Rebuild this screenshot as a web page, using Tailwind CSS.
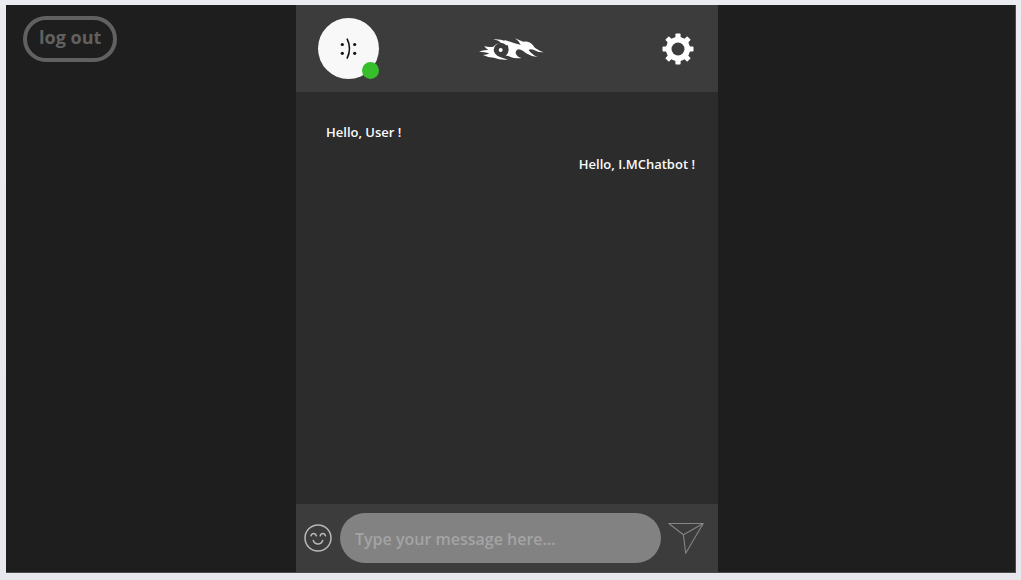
<!DOCTYPE html>
<html lang="en">
<head>
<meta charset="utf-8">
<title>I.MChatbot</title>
<script src="https://cdn.jsdelivr.net/npm/@tailwindcss/browser@4"></script>
</head>
<body class="h-screen bg-linear-to-b from-[#ebecf1] to-[#e6e8ee] pt-[5px] pr-[5px] pb-[7px] pl-[6px] font-['Open_Sans',sans-serif]">
<div class="grid h-full grid-cols-[290fr_422fr_297fr] border-r border-b border-[#4a4a4a] bg-[#1e1e1e]">
  <nav class="pt-[11px] pl-[17px]">
    <button type="button" class="h-[46px] rounded-full border-4 border-[#616161] px-3 pb-1 text-lg leading-none font-bold text-[#616161]">log out</button>
  </nav>
  <main class="flex min-h-0 flex-col bg-[#2c2c2c]">
    <header class="grid h-[87px] shrink-0 grid-cols-[1fr_auto_1fr] items-center bg-[#3c3c3c] pr-6 pl-[22px]">
      <div class="relative size-[61px] rounded-full bg-[#f8f8f8]">
        <svg class="size-full" viewBox="0 0 61 61" role="img" aria-label="Bot avatar">
          <g fill="#111"><circle cx="24.3" cy="26.5" r="1.6"/><circle cx="24.3" cy="35.3" r="1.6"/><circle cx="36.7" cy="26.5" r="1.6"/><circle cx="36.7" cy="35.3" r="1.6"/></g>
          <path d="M29 20.7Q34 30.5 29 40.6" fill="none" stroke="#111" stroke-width="1.6"/>
        </svg>
        <span class="absolute right-0 bottom-0 size-[17px] rounded-full bg-[#36bf2b]"></span>
      </div>
      <svg class="ml-[10px] h-[24px] w-[65px]" viewBox="27 27 195 72" fill="#fff" role="img" aria-label="Logo">
        <path d="M27 71Q40 65 55 66Q47 62 43 54Q56 59 70 56Q78 46 94 44Q84 37 70 34Q92 33 106 39Q114 43 117 50L109 52Q102 44 92 44Q72 48 71 66Q72 80 90 87L114 95Q90 97 72 89Q54 89 39 81Q52 81 58 76Q44 71 27 71Z"/>
        <circle cx="92" cy="66" r="6"/>
        <path d="M102 36C120 40 132 47 152 50Q146 38 135 31Q150 38 160 41Q178 38 190 53Q195 63 221 73Q203 73 190 65Q180 62 176 66Q185 80 203 87Q182 85 168 76Q155 64 144 64Q134 70 138 78Q143 88 155 90Q135 93 120 86Q112 82 107 84Q116 75 116 66Q116 50 102 36Z"/>
      </svg>
      <button type="button" aria-label="Settings" class="size-8 justify-self-end">
        <svg class="size-full" viewBox="0 0 32 32" role="presentation">
          <g fill="#fff"><circle cx="16" cy="16" r="12"/>
          <path id="tooth" d="M12.2 5 13.4 4V1.2Q13.4.5 14.2.5H17.8Q18.6.5 18.6 1.2V4L19.8 5V27L18.6 28V30.8Q18.6 31.5 17.8 31.5H14.2Q13.4 31.5 13.4 30.8V28L12.2 27Z"/>
          <use href="#tooth" transform="rotate(45 16 16)"/><use href="#tooth" transform="rotate(90 16 16)"/><use href="#tooth" transform="rotate(135 16 16)"/></g>
          <circle cx="16" cy="16" r="6.5" fill="#3c3c3c"/>
        </svg>
      </button>
    </header>
    <section aria-label="Messages" class="flex min-h-0 flex-1 flex-col gap-3 overflow-hidden pt-[30px] pr-[23px] pl-[30px] text-[13px] leading-5 font-semibold text-[#fafafa]">
      <p class="self-start">Hello, User !</p>
      <p class="self-end">Hello, I.MChatbot !</p>
    </section>
    <form class="flex h-[68px] shrink-0 items-center bg-[#3c3c3c] pr-[14px] pl-2">
      <button type="button" aria-label="Insert emoji" class="mr-2 size-7 shrink-0">
        <svg class="size-full" viewBox="0 0 28 28" fill="none" stroke="#b8b8b8" stroke-width="1.5" stroke-linecap="round"><circle cx="14" cy="14" r="13"/><path d="M7 11.8Q7.5 9.5 9.6 9.5Q11.8 9.5 12.3 11.8M16.2 11.8Q16.7 9.5 18.8 9.5Q21 9.5 21.4 11.8M9.3 16.5Q10.5 20 14 20Q17.5 20 18.7 16.5"/></svg>
      </button>
      <input type="text" aria-label="Message" placeholder="Type your message here..." class="h-[50px] min-w-0 flex-1 rounded-full bg-[#828282] px-[15px] pt-px text-base font-semibold text-white outline-none placeholder:text-[#a4a4a4]">
      <button type="submit" aria-label="Send" class="ml-[7px] h-8 w-9 shrink-0">
        <svg class="size-full" viewBox="0 0 36 32" fill="none" stroke="#858585" stroke-width="1.1" stroke-linejoin="round"><path d="M.8 1.5H35.2L17.7 31.3 15.4 12.7ZM15.4 12.7 35.2 1.5"/></svg>
      </button>
    </form>
  </main>
</div>
</body>
</html>
